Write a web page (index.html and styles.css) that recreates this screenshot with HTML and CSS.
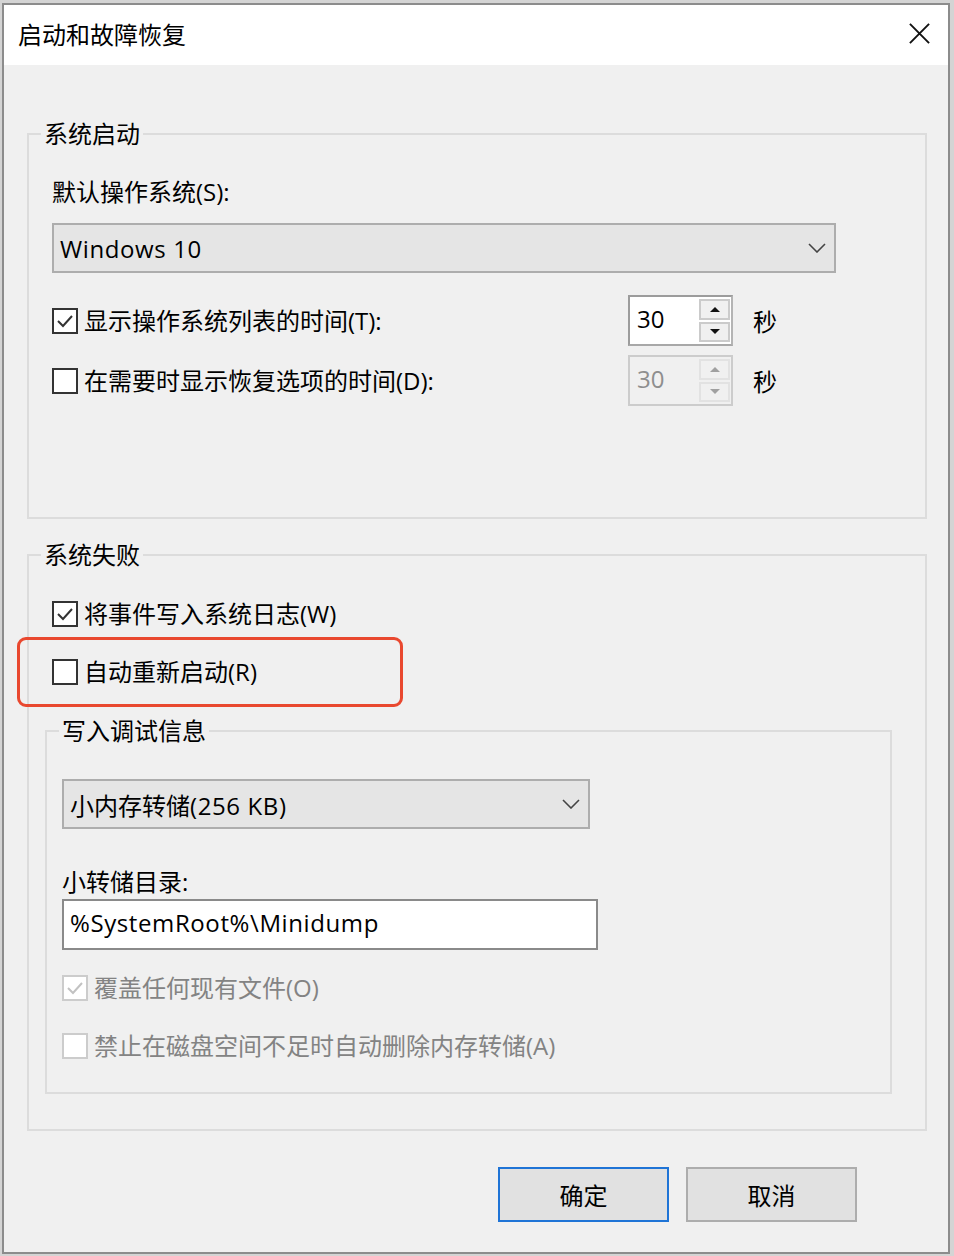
FILE: index.html
```html
<!DOCTYPE html>
<html lang="zh-CN">
<head>
  <meta charset="UTF-8">
  <title>启动和故障恢复</title>
  <link rel="stylesheet" href="styles.css">
</head>
<body>

  <div class="dialog">

    <!-- Title bar -->
    <div class="titlebar">
      <span class="title">启动和故障恢复</span>
      <svg class="close" viewBox="0 0 24 24">
        <path d="M2 2 L22 22 M22 2 L2 22" stroke="#111" stroke-width="2" fill="none"/>
      </svg>
    </div>

    <div class="dialog-body">

      <!-- System startup -->
      <fieldset class="group group-startup">
        <legend>系统启动</legend>
        <div class="field-label">默认操作系统(S):</div>
        <div class="combo combo-os">
          <span class="latin">Windows 10</span>
          <svg class="chevron" viewBox="0 0 18 10"><path d="M1 1 L9 9 L17 1" stroke="#444" stroke-width="1.6" fill="none"/></svg>
        </div>

        <div class="timer-row">
          <div class="check check-wide">
            <span class="box"><svg viewBox="0 0 22 22"><path d="M4 11 L9 16 L18 6" stroke="#333" stroke-width="2" fill="none"/></svg></span>
            <span>显示操作系统列表的时间(T):</span>
          </div>
          <div class="spin">
            <span class="spin-value">30</span>
            <span class="spin-btns">
              <span class="spin-btn"><span class="arrow-up"></span></span>
              <span class="spin-btn"><span class="arrow-down"></span></span>
            </span>
          </div>
          <span class="unit">秒</span>
        </div>

        <div class="timer-row timer-row-2">
          <div class="check check-wide">
            <span class="box"></span>
            <span>在需要时显示恢复选项的时间(D):</span>
          </div>
          <div class="spin spin-disabled">
            <span class="spin-value">30</span>
            <span class="spin-btns">
              <span class="spin-btn"><span class="arrow-up"></span></span>
              <span class="spin-btn"><span class="arrow-down"></span></span>
            </span>
          </div>
          <span class="unit">秒</span>
        </div>
      </fieldset>

      <!-- System failure -->
      <fieldset class="group group-failure">
        <legend>系统失败</legend>
        <div class="check check-indent">
          <span class="box"><svg viewBox="0 0 22 22"><path d="M4 11 L9 16 L18 6" stroke="#333" stroke-width="2" fill="none"/></svg></span>
          <span>将事件写入系统日志(W)</span>
        </div>
        <div class="check check-indent check-restart highlighted">
          <span class="box"></span>
          <span>自动重新启动(R)</span>
        </div>

        <fieldset class="group group-debug">
          <legend>写入调试信息</legend>
          <div class="combo combo-dump">
            <span>小内存转储<span class="latin">(256 KB)</span></span>
            <svg class="chevron" viewBox="0 0 18 10"><path d="M1 1 L9 9 L17 1" stroke="#444" stroke-width="1.6" fill="none"/></svg>
          </div>
          <div class="field-label dump-label">小转储目录:</div>
          <div class="textbox latin">%SystemRoot%\Minidump</div>
          <div class="check disabled overwrite">
            <span class="box"><svg viewBox="0 0 22 22"><path d="M4 11 L9 16 L18 6" stroke="#c2c2c2" stroke-width="2" fill="none"/></svg></span>
            <span>覆盖任何现有文件(O)</span>
          </div>
          <div class="check disabled no-delete">
            <span class="box"></span>
            <span>禁止在磁盘空间不足时自动删除内存转储(A)</span>
          </div>
        </fieldset>
      </fieldset>

      <!-- Dialog buttons -->
      <div class="buttons">
        <button class="btn btn-default">确定</button>
        <button class="btn">取消</button>
      </div>

    </div>
  </div>

</body>
</html>
```

FILE: styles.css
```css
/* Reset */
* {
  box-sizing: border-box;
}

html, body {
  margin: 0;
  padding: 0;
}

body {
  background: #d4d4d4;
  font-family: "Open Sans", "Noto Sans CJK SC", sans-serif;
  font-size: 24px;
  color: #000;
}

/* Latin text in Segoe UI is a bit wider than Open Sans */
.latin {
  letter-spacing: 0.6px;
}

/* Window frame */
.dialog {
  width: 948px;
  height: 1251px;
  margin: 3px 0 0 2px;
  border: 2px solid #8c8c8c;
  background: #f0f0f0;
  display: flex;
  flex-direction: column;
}

.titlebar {
  height: 60px;
  flex-shrink: 0;
  background: #fff;
  display: flex;
  align-items: center;
  justify-content: space-between;
  padding: 0 17px 0 14px;
}

.title {
  line-height: 30px;
}

.close {
  width: 23px;
  height: 23px;
  margin-top: -4px;
}

.dialog-body {
  flex: 1;
  padding: 54px 21px 0 23px;
}

/* Group boxes */
.group {
  margin: 0;
  min-width: 0;
  border: 2px solid #dcdcdc;
}

.group legend {
  padding: 0 3px;
  line-height: 30px;
}

.group-startup {
  padding: 28px 20px 111px 23px;
}

.group-startup legend {
  margin-left: -11px;
}

.group-failure {
  margin-top: 21px;
  padding: 29px 16px 35px 16px;
}

.group-failure legend {
  margin-left: -4px;
}

.group-debug {
  margin: 29px 17px 0 0;
  padding: 33px 15px 31px 15px;
}

.group-debug legend {
  margin-left: -3px;
}

.field-label {
  line-height: 30px;
}

/* Combo boxes */
.combo {
  height: 50px;
  margin-top: 16px;
  background: #e5e5e5;
  border: 2px solid #adadad;
  display: flex;
  align-items: center;
  justify-content: space-between;
  padding: 0 8px 0 6px;
}

.combo-os {
  width: 784px;
}

.combo-dump {
  width: 528px;
  margin-top: 0;
}

.chevron {
  width: 18px;
  height: 10px;
}

/* Checkboxes */
.check {
  display: flex;
  align-items: center;
  gap: 6px;
  height: 30px;
  line-height: 30px;
  white-space: nowrap;
}

.box {
  width: 26px;
  height: 26px;
  flex-shrink: 0;
  border: 2px solid #333;
  background: #fff;
  display: flex;
}

.box svg {
  width: 100%;
  height: 100%;
}

.check.disabled {
  color: #838383;
}

.check.disabled .box {
  border-color: #cccccc;
}

.check-indent {
  margin-left: 7px;
}

.check-restart {
  margin-top: 28px;
}

/* Red annotation around the auto restart option */
.highlighted {
  position: relative;
}

.highlighted::after {
  content: "";
  position: absolute;
  left: -35px;
  top: -20px;
  width: 380px;
  height: 64px;
  border: 3px solid #e9482f;
  border-radius: 9px;
}

/* Timer rows with spinners */
.timer-row {
  display: flex;
  align-items: center;
  height: 51px;
  margin-top: 22px;
}

.timer-row-2 {
  margin-top: 9px;
}

.check-wide {
  width: 576px;
}

.spin {
  width: 105px;
  height: 51px;
  border: 2px solid #9c9c9c;
  border-right-color: #b4b4b4;
  border-bottom-color: #a8a8a8;
  background: #fff;
  display: flex;
  justify-content: space-between;
}

.spin-value {
  padding-left: 7px;
  line-height: 44px;
}

.spin-btns {
  width: 31px;
  margin: 2px 1px 2px 0;
  display: flex;
  flex-direction: column;
  gap: 2px;
}

.spin-btn {
  flex: 1;
  background: #f0f0f0;
  border: 2px solid #cbcbcb;
  display: flex;
  align-items: center;
  justify-content: center;
}

.arrow-up,
.arrow-down {
  width: 0;
  height: 0;
  border-left: 5px solid transparent;
  border-right: 5px solid transparent;
}

.arrow-up {
  border-bottom: 5px solid #111;
}

.arrow-down {
  border-top: 5px solid #111;
}

.spin-disabled {
  background: #f0f0f0;
  border-color: #cccccc;
  color: #8e8e8e;
}

.spin-disabled .spin-btn {
  border-color: #e2e2e2;
}

.spin-disabled .arrow-up {
  border-bottom-color: #a0a0a0;
}

.spin-disabled .arrow-down {
  border-top-color: #a0a0a0;
}

.unit {
  margin-left: 20px;
}

/* Dump directory */
.dump-label {
  margin-top: 38px;
}

.textbox {
  width: 536px;
  height: 51px;
  margin-top: 2px;
  border: 2px solid #8a8a8a;
  background: #fff;
  padding-left: 6px;
  line-height: 44px;
}

.overwrite {
  margin-top: 23px;
}

.no-delete {
  margin-top: 28px;
}

/* Buttons */
.buttons {
  display: flex;
  justify-content: flex-end;
  gap: 17px;
  margin: 36px 70px 0 0;
}

.btn {
  width: 171px;
  height: 55px;
  border: 2px solid #adadad;
  background: #e1e1e1;
  font-family: "Open Sans", "Noto Sans CJK SC", sans-serif;
  font-size: 24px;
  color: #000;
  padding: 0;
}

.btn-default {
  border-color: #1f74d6;
}
```
